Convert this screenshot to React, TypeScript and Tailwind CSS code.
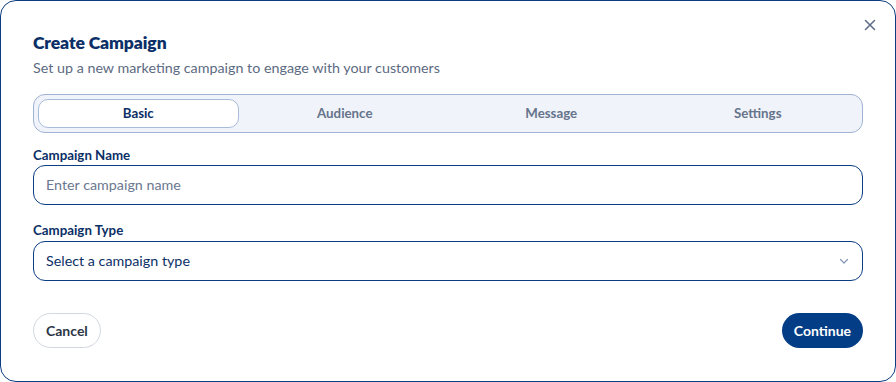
import React from "react";

export default function App() {
  const tabs = ["Basic", "Audience", "Message", "Settings"];
  return (
    <div className="w-[896px] h-[382px] bg-white" style={{ fontFamily: "Lato, 'Noto Sans', sans-serif" }}>
      <div className="relative w-full h-full rounded-2xl border border-[#0a3d82] bg-white px-8 pt-[29px] flex flex-col">
        <button className="absolute right-[18px] top-[17px] text-[#5b6b86]">
          <svg width="14" height="14" viewBox="0 0 14 14" fill="none" stroke="currentColor" strokeWidth="1.5" strokeLinecap="round">
            <path d="M2.5 2.5 L11.5 11.5 M11.5 2.5 L2.5 11.5" />
          </svg>
        </button>
        <h2 className="text-[17.5px] leading-[26px] font-extrabold text-[#0b2f66] tracking-[-0.1px]">Create Campaign</h2>
        <p className="mt-[2px] text-[14.3px] leading-5 text-[#5d6b82]">Set up a new marketing campaign to engage with your customers</p>
        <div className="mt-4 h-[39px] rounded-xl border border-[#9fb3d6] bg-[#f0f3f9] p-[1px] grid grid-cols-4">
          {tabs.map((t, i) => (
            <div
              key={t}
              className={
                i === 0
                  ? "m-[3px] flex items-center justify-center rounded-[10px] bg-white border border-[#a9bbdb] text-[13.3px] font-bold text-[#0b2f66]"
                  : "flex items-center justify-center text-[13.3px] font-bold text-[#66748c]"
              }
            >
              {t}
            </div>
          ))}
        </div>
        <label className="mt-[12px] text-[13.3px] leading-5 font-bold text-[#0b2f66]">Campaign Name</label>
        <div className="h-10 rounded-xl border border-[#0a3d82] flex items-center px-[12px] text-[14.3px] text-[#6b7890]">
          Enter campaign name
        </div>
        <label className="mt-[15px] text-[13.3px] leading-5 font-bold text-[#0b2f66]">Campaign Type</label>
        <div className="h-10 mt-[1px] rounded-xl border border-[#0a3d82] flex items-center justify-between px-[12px] text-[14.3px] text-[#0b2f66]">
          <span>Select a campaign type</span>
          <svg width="12" height="12" viewBox="0 0 12 12" fill="none" stroke="#8a9ab5" strokeWidth="1.3" strokeLinecap="round" strokeLinejoin="round">
            <path d="M2.5 4.5 L6 8 L9.5 4.5" />
          </svg>
        </div>
        <div className="mt-8 flex justify-between">
          <button className="h-[35px] px-[12px] rounded-full border border-[#d3d8e0] text-[14px] font-bold text-[#2c3547]">Cancel</button>
          <button className="h-[35px] px-[12px] rounded-full bg-[#033d85] text-[14px] font-bold text-white">Continue</button>
        </div>
      </div>
    </div>
  );
}
